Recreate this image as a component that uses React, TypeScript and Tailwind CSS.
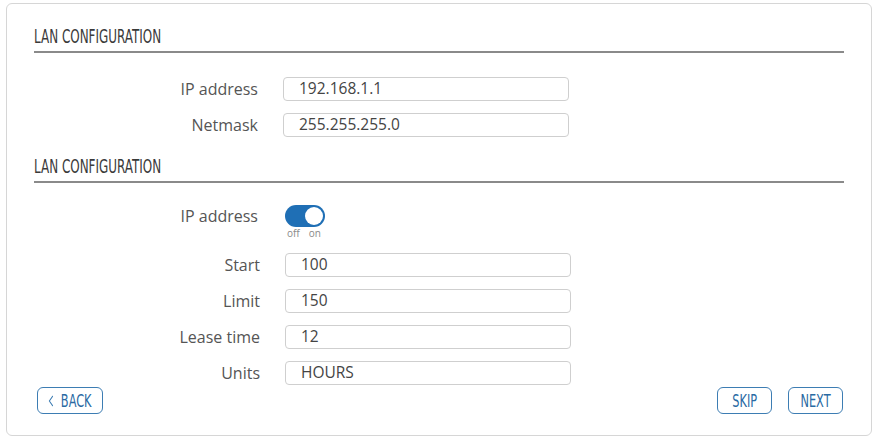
import React from "react";

const heading = "font-['Liberation_Sans_Narrow','DejaVu_Sans_Condensed',sans-serif]";
const body = "font-['Open_Sans','Noto_Sans',sans-serif]";

function Field({ label, value }: { label: string; value: string }) {
  return (
    <div className="flex items-center h-[24px]">
      <label className="w-[224px] text-right text-[16px] text-[#555]">{label}</label>
      <div className="ml-[25px] w-[286px] h-[24px] rounded-[4px] border border-[#cfcfcf] flex items-center pl-[15px] text-[15.5px] text-[#444]">
        {value}
      </div>
    </div>
  );
}

function Section({ title }: { title: string }) {
  return (
    <div className="h-[20px] flex items-center border-b-2 border-[#8a8a8a] box-content pb-[5px]">
      <h2 className={`${heading} text-[20px] leading-[20px] text-[#3a3a3a] scale-x-[0.665] origin-left whitespace-nowrap`}>
        {title}
      </h2>
    </div>
  );
}

function OutlineButton({ children, className = "" }: { children: React.ReactNode; className?: string }) {
  return (
    <button
      className={`h-[27px] rounded-[6px] border-[1.5px] border-[#3d7db3] flex items-center justify-center ${className}`}
    >
      {children}
    </button>
  );
}

export default function App() {
  return (
    <div className={`${body} bg-white w-[876px] h-[442px] pt-[3px] pl-[6px]`}>
      <div className="w-[866px] h-[433px] border border-[#d6d6d6] rounded-[6px] px-[27px] pt-[22px]">
        <Section title="LAN CONFIGURATION" />
        <div className="mt-[24px] flex flex-col gap-[12px]">
          <Field label="IP address" value="192.168.1.1" />
          <Field label="Netmask" value="255.255.255.0" />
        </div>
        <div className="mt-[19px]">
          <Section title="LAN CONFIGURATION" />
        </div>
        <div className="mt-[22px] flex items-start">
          <span className="w-[224px] text-right text-[16px] text-[#555] leading-[22px]">IP address</span>
          <div className="ml-[27px] flex flex-col">
            <div className="relative w-[40px] h-[22px] rounded-full bg-[#1f6fb5]">
              <span className="absolute right-[2px] top-[2px] w-[18px] h-[18px] rounded-full bg-white" />
            </div>
            <div className="flex gap-[9px] pl-[2px] text-[10px] leading-[12px] text-[#8a8a8a]">
              <span>off</span>
              <span>on</span>
            </div>
          </div>
        </div>
        <div className="mt-[14px] flex flex-col gap-[12px] pl-[2px]">
          <Field label="Start" value="100" />
          <Field label="Limit" value="150" />
          <Field label="Lease time" value="12" />
          <Field label="Units" value="HOURS" />
        </div>
        <div className={`${heading} mt-[2px] flex items-center text-[18px] text-[#2a6aa3]`}>
          <OutlineButton className="ml-[3px] w-[66px]">
            <span className="flex items-center gap-[10px] scale-x-[0.7] whitespace-nowrap">
              <svg width="8" height="12" viewBox="0 0 8 12" fill="none" stroke="#3d7db3" strokeWidth="1.2">
                <path d="M6.5 1 1.5 6 6.5 11" />
              </svg>
              BACK
            </span>
          </OutlineButton>
          <div className="ml-auto flex gap-[16px] mr-[1px]">
            <OutlineButton className="w-[55px]">
              <span className="scale-x-[0.7]">SKIP</span>
            </OutlineButton>
            <OutlineButton className="w-[55px]">
              <span className="scale-x-[0.7]">NEXT</span>
            </OutlineButton>
          </div>
        </div>
      </div>
    </div>
  );
}
